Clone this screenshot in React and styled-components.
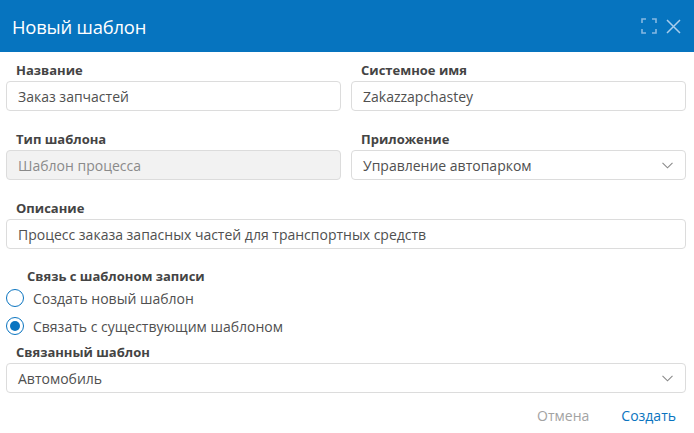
import React from "react";
import styled, { createGlobalStyle } from "styled-components";

const Global = createGlobalStyle`
  html, body { margin: 0; padding: 0; background: #fff; }
  body { font-family: "Open Sans", "Liberation Sans", sans-serif; }
  * { box-sizing: border-box; }
`;

const Dialog = styled.div`
  width: 694px;
  height: 433px;
  background: #fff;
  display: flex;
  flex-direction: column;
`;

const Header = styled.div`
  height: 52px;
  background: #0674bf;
  display: flex;
  align-items: center;
  padding: 0 13px 0 12px;
`;

const Title = styled.h1`
  flex: 1;
  margin: 0;
  font-size: 18.4px;
  font-weight: 400;
  color: #fff;
  letter-spacing: -0.2px;
`;

const HeaderButton = styled.button`
  border: 0;
  background: none;
  padding: 0;
  margin-left: ${(p) => p.$gap || 0}px;
  display: flex;
  color: ${(p) => p.$color};
`;

const Body = styled.div`
  padding: 9px 8px 0 6px;
  display: flex;
  flex-direction: column;
`;

const Grid = styled.div`
  display: grid;
  grid-template-columns: 1fr 1fr;
  column-gap: 10px;
  row-gap: 19px;
`;

const Field = styled.div`
  display: flex;
  flex-direction: column;
  grid-column: ${(p) => (p.$wide ? "1 / span 2" : "auto")};
  margin-top: ${(p) => p.$top || 0}px;
`;

const Label = styled.label`
  font-size: 13px;
  line-height: 18px;
  font-weight: 700;
  color: #444;
  padding-left: ${(p) => p.$indent ?? 10}px;
  margin-bottom: 2px;
`;

const Input = styled.div`
  height: 30px;
  border: 1px solid #dcdcdc;
  border-radius: 4px;
  background: ${(p) => (p.$disabled ? "#f2f2f2" : "#fff")};
  color: ${(p) => (p.$disabled ? "#8a8a8a" : "#505050")};
  font-size: 14px;
  display: flex;
  align-items: center;
  padding: 0 12px 0 11px;
`;

const Value = styled.span`
  flex: 1;
  white-space: nowrap;
`;

const RadioGroup = styled.div`
  display: flex;
  flex-direction: column;
  gap: 10px;
  margin-top: 2px;
`;

const RadioRow = styled.div`
  display: flex;
  align-items: center;
  height: 18px;
  font-size: 14px;
  color: #505050;
`;

const RadioMark = styled.span`
  width: 18px;
  height: 18px;
  border-radius: 50%;
  border: 1.5px solid #0a74c0;
  margin-right: 9px;
  display: flex;
  align-items: center;
  justify-content: center;
  &::after {
    content: "";
    width: 10px;
    height: 10px;
    border-radius: 50%;
    background: ${(p) => (p.$checked ? "#0a74c0" : "transparent")};
  }
`;

const Footer = styled.div`
  display: flex;
  justify-content: flex-end;
  gap: 32px;
  padding: 13px 10px 0 0;
`;

const TextButton = styled.button`
  border: 0;
  background: none;
  padding: 0;
  font-family: inherit;
  font-size: 14px;
  line-height: 20px;
  color: ${(p) => (p.$primary ? "#0a74c0" : "#a3a3a3")};
`;

const Chevron = () => (
  <svg width="11" height="7" viewBox="0 0 11 7" fill="none">
    <path d="M0.5 0.8 L5.5 5.8 L10.5 0.8" stroke="#8a8a8a" strokeWidth="1.1" />
  </svg>
);

const Select = ({ value }) => (
  <Input>
    <Value>{value}</Value>
    <Chevron />
  </Input>
);

export default function App() {
  return (
    <>
      <Global />
      <Dialog>
        <Header>
          <Title>Новый шаблон</Title>
          <HeaderButton $color="#86b8e2">
            <svg width="16" height="16" viewBox="0 0 16 16" fill="none" stroke="currentColor" strokeWidth="1.6">
              <path d="M1 5 V1 H5 M11 1 H15 V5 M15 11 V15 H11 M5 15 H1 V11" />
            </svg>
          </HeaderButton>
          <HeaderButton $gap={9} $color="#a9cdec">
            <svg width="15" height="15" viewBox="0 0 15 15" fill="none" stroke="currentColor" strokeWidth="1.5">
              <path d="M1 1 L14 14 M14 1 L1 14" />
            </svg>
          </HeaderButton>
        </Header>
        <Body>
          <Grid>
            <Field>
              <Label>Название</Label>
              <Input><Value>Заказ запчастей</Value></Input>
            </Field>
            <Field>
              <Label>Системное имя</Label>
              <Input><Value>Zakazzapchastey</Value></Input>
            </Field>
            <Field>
              <Label>Тип шаблона</Label>
              <Input $disabled><Value>Шаблон процесса</Value></Input>
            </Field>
            <Field>
              <Label>Приложение</Label>
              <Select value="Управление автопарком" />
            </Field>
            <Field $wide>
              <Label>Описание</Label>
              <Input><Value>Процесс заказа запасных частей для транспортных средств</Value></Input>
            </Field>
          </Grid>
          <Field $top={18}>
            <Label $indent={21}>Связь с шаблоном записи</Label>
            <RadioGroup>
              <RadioRow>
                <RadioMark />
                Создать новый шаблон
              </RadioRow>
              <RadioRow>
                <RadioMark $checked />
                Связать с существующим шаблоном
              </RadioRow>
            </RadioGroup>
          </Field>
          <Field $top={8}>
            <Label>Связанный шаблон</Label>
            <Select value="Автомобиль" />
          </Field>
          <Footer>
            <TextButton>Отмена</TextButton>
            <TextButton $primary>Создать</TextButton>
          </Footer>
        </Body>
      </Dialog>
    </>
  );
}
